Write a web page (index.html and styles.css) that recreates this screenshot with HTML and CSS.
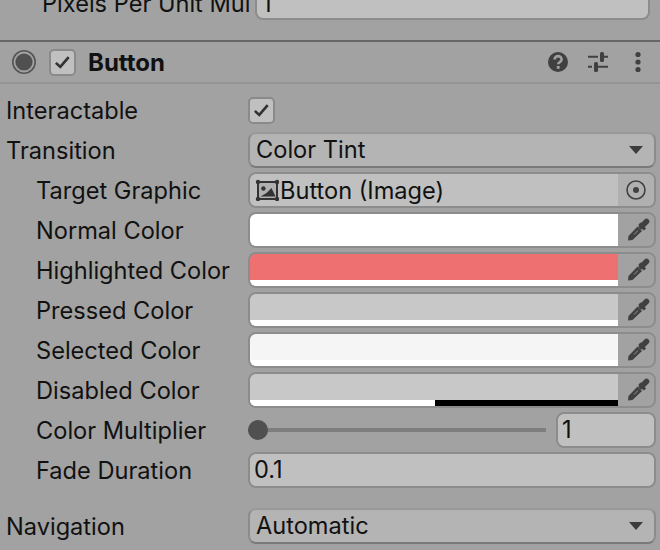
FILE: index.html
```html
<!DOCTYPE html>
<html lang="en">
<head>
<meta charset="utf-8">
<title>Button Inspector</title>
<link rel="stylesheet" href="styles.css">
</head>
<body>
<div class="inspector">
  <div class="row top-row">
    <span class="label indent">Pixels Per Unit Mul</span>
    <div class="field input"><span class="value">1</span></div>
  </div>
  <div class="header">
    <svg class="radio" width="26" height="26" viewBox="0 0 26 26"><circle cx="13" cy="13" r="11.2" fill="none" stroke="#555" stroke-width="1.6"/><circle cx="13" cy="13" r="8.6" fill="#505050"/></svg>
    <div class="check head-check"><svg width="26" height="26" viewBox="0 0 26 26"><path d="M5.500 14l5 4.500 9.500-11" fill="none" stroke="#333" stroke-width="3"/></svg></div>
    <span class="title">Button</span>
    <div class="head-icons">
      <svg width="22" height="22" viewBox="0 0 22 22"><circle cx="11" cy="11" r="10" fill="#404040"/><path d="M7.600 8.600c0-4.600 7-4.600 7 0 0 2.600-3.400 2.400-3.400 4.600" fill="none" stroke="#a0a0a0" stroke-width="2.600"/><rect x="9.800" y="15" width="2.800" height="2.800" fill="#a0a0a0"/></svg>
      <svg width="22" height="22" viewBox="0 0 22 22"><path d="M1 5.700h10M17 5.700h4M1 15.700h4M11 15.700h10" stroke="#404040" stroke-width="2"/><rect x="13" y="1" width="4" height="10" rx="1.500" fill="#404040"/><rect x="7" y="11" width="4" height="10" rx="1.500" fill="#404040"/></svg>
      <svg class="dots" width="6" height="22" viewBox="0 0 6 22"><circle cx="3" cy="3.500" r="2.600" fill="#404040"/><circle cx="3" cy="11" r="2.600" fill="#404040"/><circle cx="3" cy="18.500" r="2.600" fill="#404040"/></svg>
    </div>
  </div>
  <div class="rows">
    <div class="row">
      <span class="label">Interactable</span>
      <div class="check"><svg width="26" height="26" viewBox="0 0 26 26"><path d="M5.500 14l5 4.500 9.500-11" fill="none" stroke="#333" stroke-width="3"/></svg></div>
    </div>
    <div class="row">
      <span class="label">Transition</span>
      <div class="field popup"><span class="value">Color Tint</span><span class="arrow"></span></div>
    </div>
    <div class="row">
      <span class="label indent">Target Graphic</span>
      <div class="field object">
        <svg class="img-icon" width="24" height="22" viewBox="0 0 24 22"><rect x="3" y="3" width="19" height="17" fill="#b0b0b0" stroke="#333" stroke-width="2"/><circle cx="8.400" cy="9.500" r="2.200" fill="#333"/><path d="M5.500 17.500l6-3.500 5-5 4 8.500z" fill="#333"/><g fill="#333"><circle cx="3" cy="3" r="2.200"/><circle cx="22" cy="3" r="2.200"/><circle cx="3" cy="20" r="2.200"/><circle cx="22" cy="20" r="2.200"/></g></svg>
        <span class="object-name">Button (Image)</span>
        <div class="picker"><svg width="22" height="22" viewBox="0 0 22 22"><circle cx="11" cy="11" r="9" fill="none" stroke="#404040" stroke-width="1.600"/><circle cx="11" cy="11" r="3" fill="#404040"/></svg></div>
      </div>
    </div>
    <div class="row">
      <span class="label indent">Normal Color</span>
      <div class="color"><div class="swatch"><div class="main c-normal"></div><div class="alpha"></div></div><div class="dropper"><svg width="24" height="24" viewBox="0 0 24 24"><use href="#eye"/></svg></div></div>
    </div>
    <div class="row">
      <span class="label indent">Highlighted Color</span>
      <div class="color"><div class="swatch"><div class="main c-high"></div><div class="alpha"></div></div><div class="dropper"><svg width="24" height="24" viewBox="0 0 24 24"><use href="#eye"/></svg></div></div>
    </div>
    <div class="row">
      <span class="label indent">Pressed Color</span>
      <div class="color"><div class="swatch"><div class="main c-pressed"></div><div class="alpha"></div></div><div class="dropper"><svg width="24" height="24" viewBox="0 0 24 24"><use href="#eye"/></svg></div></div>
    </div>
    <div class="row">
      <span class="label indent">Selected Color</span>
      <div class="color"><div class="swatch"><div class="main c-selected"></div><div class="alpha"></div></div><div class="dropper"><svg width="24" height="24" viewBox="0 0 24 24"><use href="#eye"/></svg></div></div>
    </div>
    <div class="row">
      <span class="label indent">Disabled Color</span>
      <div class="color"><div class="swatch"><div class="main c-disabled"></div><div class="alpha half"><div class="alpha-white"></div><div class="alpha-black"></div></div></div><div class="dropper"><svg width="24" height="24" viewBox="0 0 24 24"><use href="#eye"/></svg></div></div>
    </div>
    <div class="row">
      <span class="label indent">Color Multiplier</span>
      <div class="slider">
        <div class="track"><span class="thumb"></span></div>
        <div class="field input slider-value"><span class="value">1</span></div>
      </div>
    </div>
    <div class="row">
      <span class="label indent">Fade Duration</span>
      <div class="field input"><span class="value">0.1</span></div>
    </div>
    <div class="row nav-row">
      <span class="label">Navigation</span>
      <div class="field popup"><span class="value">Automatic</span><span class="arrow"></span></div>
    </div>
  </div>
</div>
<svg class="defs" width="0" height="0"><defs><g id="eye"><path d="M2 22.500l.5-4.500 9-9.500 4.500 4.500-9.500 9z" fill="#404040"/><path d="M8 16.500l4-4" stroke="#6e6e6e" stroke-width="1.200"/><path d="M13.500 5.500l5.500 6" stroke="#404040" stroke-width="3"/><path d="M15.500 8.500l5-5" stroke="#404040" stroke-width="5.500" stroke-linecap="round"/></g></defs></svg>
</body>
</html>
```
FILE: styles.css
```css
* { box-sizing: border-box; }
html, body { margin: 0; padding: 0; }
body {
  width: 660px;
  height: 550px;
  overflow: hidden;
  background: #a2a2a2;
  font-family: Inter, "Liberation Sans", sans-serif;
  font-size: 23.6px;
  color: #111;
}
.defs { position: absolute; }
.inspector { display: flex; flex-direction: column; padding-right: 4px; }
.row {
  display: flex;
  align-items: center;
  height: 40px;
  padding-left: 6px;
}
.top-row {
  height: 40px;
  margin-top: -18px;
  margin-bottom: 18px;
}
.top-row .field { margin-right: 6px; }
.top-row .value { padding-left: 5px; padding-top: 3px; }
.label { width: 242px; flex: none; white-space: nowrap; overflow: hidden; }
.indent { padding-left: 30px; }
.top-row .indent { width: 249px; padding-left: 36px; padding-top: 3px; }
.field {
  flex: 1;
  height: 36px;
  display: flex;
  align-items: center;
  border: 2px solid #8c8c8c;
  border-radius: 8px;
  background: #c0c0c0;
}
.value { padding-left: 4px; line-height: 32px; }
.popup {
  background: #b4b4b4;
  border-bottom-color: #7a7a7a;
  border-top-color: #999;
  justify-content: space-between;
}
.popup .value { padding-left: 6px; }
.arrow {
  width: 0;
  height: 0;
  margin-right: 11px;
  border-left: 7px solid transparent;
  border-right: 7px solid transparent;
  border-top: 8px solid #3c3c3c;
}
.header {
  display: flex;
  align-items: center;
  height: 44px;
  margin-right: -4px;
  padding-left: 11px;
  border-top: 2px solid #666;
  border-bottom: 2px solid #949494;
}
.radio { flex: none; }
.check {
  flex: none;
  width: 27px;
  height: 27px;
  display: flex;
  align-items: center;
  justify-content: center;
  border: 2px solid #8a8a8a;
  border-radius: 5px;
  background: #c0c0c0;
}
.head-check { margin-left: 12px; }
.title { margin-left: 12px; font-size: 24px; font-weight: 700; }
.head-icons {
  margin-left: auto;
  margin-right: 19px;
  display: flex;
  align-items: center;
  gap: 18px;
}
.dots { margin-left: 8px; }
.rows { display: flex; flex-direction: column; padding-top: 6px; }
.object { overflow: hidden; padding-left: 5px; }
.img-icon { flex: none; }
.object-name { margin-left: 1px; flex: 1; }
.picker {
  flex: none;
  width: 36px;
  height: 32px;
  display: flex;
  align-items: center;
  justify-content: center;
  background: #b0b0b0;
}
.color {
  flex: 1;
  height: 36px;
  display: flex;
  border: 2px solid #8c8c8c;
  border-radius: 8px;
  overflow: hidden;
  background: #a2a2a2;
}
.swatch { flex: 1; display: flex; flex-direction: column; }
.main { flex: 1; }
.alpha { height: 6px; background: #fff; }
.half { display: flex; }
.alpha-white { width: 185px; background: #fff; }
.alpha-black { flex: 1; background: #000; }
.c-normal { background: #fff; }
.c-high { background: #ef7070; }
.c-pressed { background: #c8c8c8; }
.c-selected { background: #f5f5f5; }
.c-disabled { background: #c8c8c8; }
.dropper {
  flex: none;
  width: 36px;
  padding-left: 4px;
  display: flex;
  align-items: center;
  justify-content: center;
  background: #a2a2a2;
}
.slider { flex: 1; display: flex; align-items: center; }
.track {
  flex: 1;
  height: 4px;
  margin-right: 10px;
  display: flex;
  align-items: center;
  background: #7e7e7e;
}
.thumb {
  width: 20px;
  height: 20px;
  border-radius: 50%;
  background: #505050;
}
.slider-value { flex: none; width: 100px; }
.nav-row { margin-top: 16px; }
```
